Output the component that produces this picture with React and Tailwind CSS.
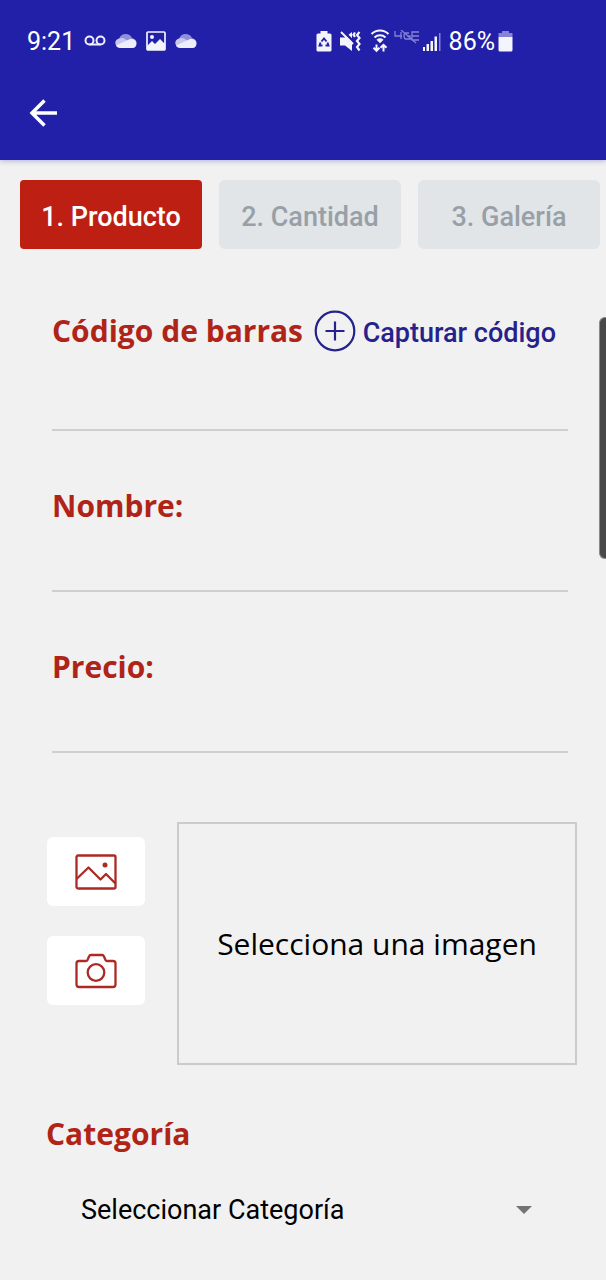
import React from "react";

function Voicemail() {
  return (
    <svg width="22" height="12" viewBox="0 0 22 12" fill="none" stroke="#f0f0fc" strokeWidth="2">
      <circle cx="5.5" cy="5.5" r="4" />
      <circle cx="16.5" cy="5.5" r="4" />
      <path d="M5.5 9.5h11" />
    </svg>
  );
}

function Cloud() {
  return (
    <svg width="22" height="16" viewBox="0 0 22 16">
      <path d="M4 6C5 2.500 7.500 1 10.500 1S16 2.500 17 5c2.500.5 4.500 2.500 4.500 5H1C.5 8 2 6.300 4 6z" fill="#8f8fdc" />
      <path d="M4 5.500c3-1 5-.5 7 1.200l4 3.300L3 14C-1 12-.5 6.500 4 5.500z" fill="#c6c6f0" />
      <path d="M1 12.500L14 6.500c4-1.500 7.500.5 7.500 4 0 2.500-1.500 4.500-4 4.500H5c-2 0-3.500-1-4-2.500z" fill="#eeeefb" />
    </svg>
  );
}

function Photo() {
  return (
    <svg width="20" height="20" viewBox="0 0 20 20">
      <rect x="1" y="1" width="18" height="18" rx="1" fill="none" stroke="#f4f4fd" strokeWidth="1.700" />
      <circle cx="6" cy="6" r="2" fill="#f4f4fd" />
      <path d="M1 15l5-5 3 3 5-5 5 5v6H1z" fill="#f4f4fd" />
    </svg>
  );
}

function BatteryCare() {
  return (
    <svg width="16" height="21" viewBox="0 0 16 21">
      <path d="M4.500 0h7v2.500H14q1.500 0 1.500 1.500v15q0 1.500-1.500 1.500H2Q.5 20.500.5 19V4Q.5 2.500 2 2.500h2.500z" fill="#f4f4fd" />
      <path d="M5.500 10.500L8 7.500l2.500 3M11.500 11.500l1 3H9.500M6.500 14.500h-3l1-3" fill="none" stroke="#2220a8" strokeWidth="1.900" />
    </svg>
  );
}

function Mute() {
  return (
    <svg width="22" height="21" viewBox="0 0 22 21">
      <path d="M0 6.500h5L12 1v19l-7-5.500H0z" fill="#f4f4fd" />
      <path d="M3 0l11 11" stroke="#2220a8" strokeWidth="2.500" />
      <path d="M1 1l12 12" stroke="#f4f4fd" strokeWidth="2" />
      <path d="M15 1.500l-1.500 2.200L15 6M19.500 1L17 4l2.500 3L17 10l2.500 3-2.500 3 2.500 3.500" fill="none" stroke="#f4f4fd" strokeWidth="2.200" />
    </svg>
  );
}

function Wifi() {
  return (
    <svg width="20" height="24" viewBox="0 0 20 24" fill="none" stroke="#f4f4fd" strokeWidth="2">
      <path d="M1.500 5a12 12 0 0 1 17 0M4.500 8.500a8 8 0 0 1 11 0" />
      <path d="M6.500 10.800a5 5 0 0 1 7 0L10 14.300z" fill="#f4f4fd" stroke="none" />
      <path d="M6.500 15.500V22M3.500 18.800l3 3 3-3M13.500 22.500V16M10.500 18.800l3-3 3 3" />
    </svg>
  );
}

function NoLte() {
  return (
    <svg width="26" height="14" viewBox="0 0 26 14" fill="none" stroke="#8583d6" strokeWidth="1.300">
      <path d="M1 1v5h7M7 2v7M15 3h-3q-2 0-2 3t2 3h4V6h-3M25 2h-7v8h7M18 6h7M7 0l15 13" />
    </svg>
  );
}

function Signal() {
  return (
    <svg width="18" height="20" viewBox="0 0 18 20" fill="#f4f4fd">
      <path d="M0 15h2v4H0zM3.500 12H6v7H3.500zM7.500 9H10v10H7.500zM11.500 4.500H14V19h-2.500z" />
      <path d="M16 1h1.500v18H16z" fill="#8583d6" />
    </svg>
  );
}

function Battery() {
  return (
    <svg width="15" height="21" viewBox="0 0 15 21">
      <path d="M4 0h7v2h3q.5 0 .5.5V6H.5V2.500Q.5 2 1 2h3z" fill="#8583d6" />
      <path d="M.5 6h14v13q0 1.500-1.500 1.500H2Q.5 20.500.5 19z" fill="#f4f4fd" />
    </svg>
  );
}

const tabs = ["1. Producto", "2. Cantidad", "3. Galería"];

const heading = "font-['Open_Sans',sans-serif] text-[30px] leading-[44px] font-bold text-[#b02418]";
const field = "block h-16 w-full border-b-2 border-[#cfcfcf] bg-transparent px-1 text-2xl outline-none";

export default function App() {
  return (
    <div className="relative min-h-screen overflow-hidden bg-[#f1f1f1] font-[Roboto,sans-serif] text-black">
      <header className="bg-[#2220a8] pb-7 text-white shadow-[0_1px_5px_rgba(34,32,168,0.3)]">
        <div className="flex h-[82px] items-center justify-between pr-[93px] pl-[27px] text-[25px]">
          <div className="flex items-center gap-[9px]">
            <span className="pt-0.5">9:21</span>
            <Voicemail />
            <Cloud />
            <Photo />
            <Cloud />
          </div>
          <div className="flex items-center">
            <div className="flex items-center gap-2">
              <BatteryCare />
              <Mute />
              <Wifi />
            </div>
            <div className="ml-1 flex items-center gap-[3px] pr-2">
              <span className="pb-2"><NoLte /></span>
              <span className="pt-0.5"><Signal /></span>
            </div>
            <span className="pt-0.5 pr-[3px]">86%</span>
            <Battery />
          </div>
        </div>
        <button type="button" aria-label="Volver" className="ml-[29px] flex h-[50px] items-center pt-3">
          <svg width="28" height="28" viewBox="0 0 28 28" fill="none" stroke="white" strokeWidth="3.500">
            <path d="M28 14H3.500M15.500 1.500L3 14l12.500 12.500" />
          </svg>
        </button>
      </header>

      <nav className="grid grid-cols-3 gap-[17px] pt-5 pr-[6px] pl-5 text-[27px] font-medium">
        {tabs.map((tab, i) => (
          <button
            key={tab}
            type="button"
            disabled={i > 0}
            className={
              i === 0
                ? "h-[69px] rounded bg-[#bd1f12] pt-1.5 text-white"
                : "h-[69px] rounded-md bg-[#e1e5e8] pt-1.5 text-[#98a0a7]"
            }
          >
            {tab}
          </button>
        ))}
      </nav>

      <main>
        <form>
          <div className="flex flex-col gap-[53px] pt-[58px] pr-[38px] pl-[52px]">
            <div>
              <div className="mb-3 flex items-center justify-between pr-3">
                <label htmlFor="code" className={heading}>Código de barras</label>
                <button type="button" className="flex items-center gap-[7px] text-[27px] leading-[44px] font-medium text-[#26228c]">
                  <svg width="42" height="42" viewBox="0 0 42 42" fill="none" stroke="#26228c" strokeWidth="2.200">
                    <circle cx="21" cy="21" r="19.300" />
                    <path d="M11.500 21h19M21 11.500v19" />
                  </svg>
                  <span className="pt-1">Capturar código</span>
                </button>
              </div>
              <input id="code" className={field} />
            </div>
            <div>
              <label htmlFor="name" className={"block " + heading}>Nombre:</label>
              <input id="name" className={field} />
            </div>
            <div>
              <label htmlFor="price" className={"block " + heading}>Precio:</label>
              <input id="price" className={field} />
            </div>
          </div>

          <div className="flex gap-8 pt-[69px] pr-[29px] pl-[47px]">
            <div className="flex flex-col gap-[30px] pt-[15px]">
              <button type="button" aria-label="Galería" className="flex h-[69px] w-[98px] items-center justify-center rounded-md bg-white">
                <svg width="42" height="36" viewBox="0 0 42 36" fill="none" stroke="#ad2a24" strokeWidth="2.300" strokeLinejoin="round">
                  <rect x="1.500" y="1.500" width="39" height="33" rx="1.500" />
                  <path d="M1.500 25L13.500 13.500l12 12 5.500-5.500 9.500 9.500" />
                  <circle cx="30" cy="11" r="2.500" fill="#ad2a24" stroke="none" />
                </svg>
              </button>
              <button type="button" aria-label="Cámara" className="flex h-[69px] w-[98px] items-center justify-center rounded-md bg-white">
                <svg width="42" height="36" viewBox="0 0 42 36" fill="none" stroke="#ad2a24" strokeWidth="2.300" strokeLinejoin="round">
                  <path d="M4 8h7q1 0 1.500-1L14 3.500Q14.500 2 16 2h11q1.500 0 2 1.500L30.500 7q.5 1 1.500 1h6q2.500 0 2.500 2.500v21q0 2.500-2.500 2.500H4q-2.500 0-2.500-2.500v-21Q1.500 8 4 8z" />
                  <circle cx="21" cy="19.500" r="8.300" />
                </svg>
              </button>
            </div>
            <div className="flex h-[243px] flex-1 items-center justify-center border-2 border-[#cbcbcb] font-['Open_Sans',sans-serif] text-[30px]">
              Selecciona una imagen
            </div>
          </div>

          <div className="px-[46px] pt-[47px]">
            <label htmlFor="category" className={"block " + heading}>Categoría</label>
            <div className="grid items-center pt-8 pl-[35px]">
              <select id="category" className="col-start-1 row-start-1 h-11 w-full appearance-none bg-transparent text-[27px] outline-none">
                <option>Seleccionar Categoría</option>
              </select>
              <svg className="pointer-events-none col-start-1 row-start-1 mr-7 justify-self-end" width="16" height="8" viewBox="0 0 16 8">
                <path d="M0 0h16L8 8z" fill="#737373" />
              </svg>
            </div>
          </div>
        </form>
      </main>

      <div className="absolute top-[317px] right-0 h-[242px] w-[7px] rounded-l-md border border-r-0 border-[#8a8a8a] bg-[#484848]" />
    </div>
  );
}
